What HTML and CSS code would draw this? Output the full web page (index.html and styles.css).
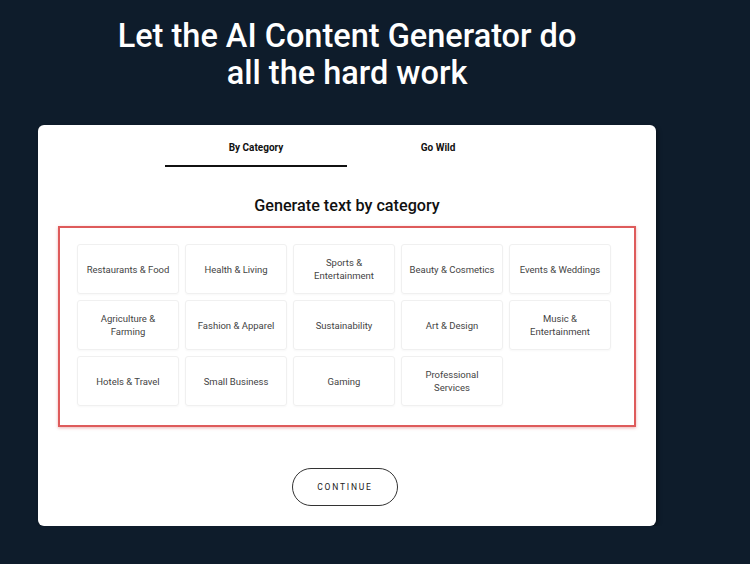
FILE: index.html
```html
<!DOCTYPE html>
<html lang="en">
  <head>
    <meta charset="UTF-8" />
    <meta name="viewport" content="width=device-width, initial-scale=1.0" />
    <title>AI Content Generator</title>
    <link rel="stylesheet" href="styles.css">
  </head>
  <body>
    <div class="page">
      <h1>Let the AI Content Generator do<br />all the hard work</h1>

      <div class="card">
        <div class="tabs">
          <div class="tab active">By Category</div>
          <div class="tab">Go Wild</div>
        </div>

        <h2>Generate text by category</h2>

        <div class="category-box">
          <div class="category-grid">
            <div class="tile">Restaurants &amp; Food</div>
            <div class="tile">Health &amp; Living</div>
            <div class="tile">Sports &amp;<br />Entertainment</div>
            <div class="tile">Beauty &amp; Cosmetics</div>
            <div class="tile">Events &amp; Weddings</div>
            <div class="tile">Agriculture &amp;<br />Farming</div>
            <div class="tile">Fashion &amp; Apparel</div>
            <div class="tile">Sustainability</div>
            <div class="tile">Art &amp; Design</div>
            <div class="tile">Music &amp;<br />Entertainment</div>
            <div class="tile">Hotels &amp; Travel</div>
            <div class="tile">Small Business</div>
            <div class="tile">Gaming</div>
            <div class="tile">Professional<br />Services</div>
          </div>
        </div>

        <a href="#" class="button">CONTINUE</a>
      </div>
    </div>
  </body>
</html>
```

FILE: styles.css
```css
body {
  font-family: Roboto, "Liberation Sans", sans-serif;
  background-color: #0e1c2b;
  color: #222;
  margin: 0;
}

.page {
  width: 618px;
  margin-left: 38px;
}

h1 {
  margin: 18px 0 33px;
  text-align: center;
  color: #fff;
  font-size: 32.5px;
  font-weight: 500;
  line-height: 37px;
}

.card {
  background-color: #fff;
  border-radius: 6px;
  padding: 0 20px 20px;
  box-shadow: 2px 2px 4px rgba(0, 0, 0, 0.35);
  display: flex;
  flex-direction: column;
  align-items: center;
}

.tabs {
  display: flex;
}

.tab {
  width: 182px;
  padding: 16px 0 10px;
  border-bottom: 2px solid transparent;
  text-align: center;
  font-size: 10px;
  font-weight: 700;
  line-height: 14px;
  color: #111;
}

.tab.active {
  border-bottom-color: #111;
}

h2 {
  margin: 29px 0 10px;
  font-size: 16.2px;
  font-weight: 500;
  line-height: 20px;
  color: #111;
}

.category-box {
  align-self: stretch;
  border: 2px solid #de5b5b;
  box-shadow: 0 1px 3px rgba(200, 40, 40, 0.35);
  padding: 16px 16px 19px 17px;
}

.category-grid {
  display: grid;
  grid-template-columns: repeat(5, 102px);
  grid-auto-rows: 50px;
  gap: 6px;
}

.tile {
  display: flex;
  align-items: center;
  justify-content: center;
  text-align: center;
  border: 1px solid #f0f0f0;
  border-radius: 3px;
  box-shadow: 0 1px 2px rgba(0, 0, 0, 0.03);
  font-size: 9.5px;
  line-height: 13px;
  color: #444;
}

.button {
  margin: 41px 4px 0 0;
  width: 104px;
  height: 36px;
  border: 1px solid #333;
  border-radius: 19px;
  display: flex;
  align-items: center;
  justify-content: center;
  font-size: 8.5px;
  letter-spacing: 1.8px;
  color: #222;
  text-decoration: none;
}
```
